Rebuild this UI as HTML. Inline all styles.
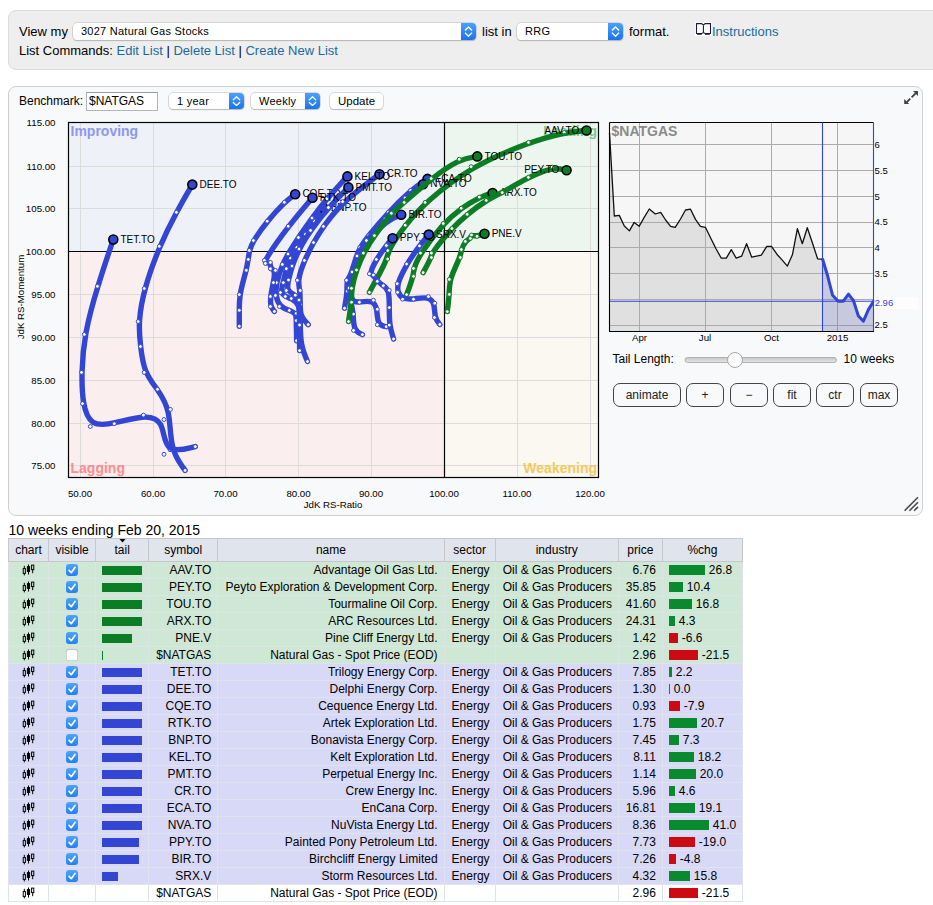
<!DOCTYPE html>
<html><head><meta charset="utf-8"><title>RRG - 3027 Natural Gas Stocks</title>
<style>
html,body{margin:0;padding:0;background:#fff}
body{width:933px;height:905px;overflow:hidden;position:relative;font-family:"Liberation Sans",Arial,Helvetica,sans-serif;color:#000;font-size:13px}
.abs{position:absolute;white-space:nowrap}
a{color:#1a6a9b;text-decoration:none}
#topbar{left:8px;top:10px;width:940px;height:58px;background:#eeeeee;border:1px solid #dcdcdc;border-radius:8px}
#panel{left:8px;top:86px;width:913px;height:428px;background:#f8f9fb;border:1px solid #cfcfcf;border-radius:8px}
.sel{height:16px;border-radius:4px;background:#fff;box-shadow:0 0 0 0.5px #b9b9b9,0 1px 1px rgba(0,0,0,.25);font-size:11px;line-height:16px;box-sizing:border-box;padding-left:8px;letter-spacing:0.25px}
.sel b{position:absolute;right:0;top:0;width:15px;height:16px;border-radius:0 4px 4px 0;background:linear-gradient(#4ba1fb,#1a73f0)}
.sel b svg{position:absolute;left:0;top:0;width:15px;height:100%}
.sel.tall{height:17px;line-height:17px}.sel.tall b{height:17px}
.btn{height:16px;border-radius:4px;background:#fff;box-shadow:0 0 0 0.5px #b9b9b9,0 1px 1px rgba(0,0,0,.25);font-size:11.5px;line-height:16px;text-align:center}
.inp{background:#fff;border:1px solid #b4b4b4;border-top-color:#9a9a9a;box-sizing:border-box;font-size:12px;line-height:17px;padding-left:2px}
.rb{height:24px;border:1px solid #444;border-radius:7px;box-sizing:border-box;font-size:12px;line-height:22px;text-align:center;background:#f8f9fb;color:#222}
svg text{font-family:"Liberation Sans",Arial,Helvetica,sans-serif}
table{border-collapse:collapse;font-size:12px;table-layout:fixed;width:735px}
#tbl{left:8px;top:538px}
th{font-weight:normal;background:#e0e4ec;height:22px;padding:0;border:1px solid #c8c8cc;font-size:12px}
td{height:16px;padding:0;border:1px solid #dde3e3;line-height:16px;white-space:nowrap;position:relative}
tr.g td{background:#cfe8d5;border-color:#dde4e6}
tr.b td{background:#d8d9f6;border-color:#dfe3ee}
tr.w td{background:#fff;border-color:#dde4e8}
td.c{text-align:center}
td.r{text-align:right;padding-right:6px}
td.l{text-align:left;padding-left:7px}
td.t{text-align:left;padding-left:6px}
td.p{text-align:left;padding-left:6px}
.tb{display:inline-block;height:9px;vertical-align:-1px}
.pb{display:inline-block;height:10px;vertical-align:-1px;margin-right:4px}
.ci{vertical-align:-2px}
.cb{display:inline-block;width:12px;height:12px;border-radius:3px;vertical-align:-2px;position:relative}
.cb.on{background:linear-gradient(#4da4fb,#2280f4)}
.cb.off{background:#fff;box-shadow:inset 0 0 0 0.5px #aaa,inset 0 1px 1px rgba(0,0,0,.15)}
.cb svg{position:absolute;left:0;top:0}
</style></head><body>

<div id="topbar" class="abs"></div>
<div class="abs" style="left:19px;top:23px;line-height:18px">View my</div>
<div class="abs sel tall" style="left:73px;top:23px;width:403px">3027 Natural Gas Stocks<b><svg viewBox="0 0 15 16" preserveAspectRatio="none"><path d="M4.3 6.7L7.5 3.8l3.2 2.9M4.3 9.5l3.2 2.9 3.2-2.9" fill="none" stroke="#fff" stroke-width="1.3" stroke-linecap="round" stroke-linejoin="round"/></svg></b></div>
<div class="abs" style="left:482px;top:23px;line-height:18px">list in</div>
<div class="abs sel tall" style="left:517px;top:23px;width:106px">RRG<b><svg viewBox="0 0 15 16" preserveAspectRatio="none"><path d="M4.3 6.7L7.5 3.8l3.2 2.9M4.3 9.5l3.2 2.9 3.2-2.9" fill="none" stroke="#fff" stroke-width="1.3" stroke-linecap="round" stroke-linejoin="round"/></svg></b></div>
<div class="abs" style="left:629px;top:23px;line-height:18px">format.</div>
<svg class="abs" style="left:695px;top:22px" width="17" height="14" viewBox="0 0 17 14"><rect width="17" height="14" fill="#fff"/><path d="M1.5 1.6H6.6L8.4 3L10.2 1.6H15.5V11.5H10.2L8.4 10.6L6.6 11.5H1.5ZM8.4 3V10.6" fill="#fff" stroke="#1b1b36" stroke-width="1.1" stroke-linejoin="miter"/><path d="M2.2 12.3H6.8M10 12.3H14.8" stroke="#1b1b36" stroke-width="1" fill="none"/></svg>
<div class="abs" style="left:712px;top:23px;line-height:18px"><a>Instructions</a></div>
<div class="abs" style="left:19px;top:42px;line-height:18px">List Commands: <a>Edit List</a> | <a>Delete List</a> | <a>Create New List</a></div>

<div id="panel" class="abs"></div>
<div class="abs" style="left:19px;top:92px;line-height:18px;font-size:12px">Benchmark:</div>
<div class="abs inp" style="left:86px;top:92px;width:72px;height:19px">$NATGAS</div>
<div class="abs sel" style="left:169px;top:93px;width:75px">1 year<b><svg viewBox="0 0 15 16" preserveAspectRatio="none"><path d="M4.3 6.7L7.5 3.8l3.2 2.9M4.3 9.5l3.2 2.9 3.2-2.9" fill="none" stroke="#fff" stroke-width="1.3" stroke-linecap="round" stroke-linejoin="round"/></svg></b></div>
<div class="abs sel" style="left:251px;top:93px;width:69px">Weekly<b><svg viewBox="0 0 15 16" preserveAspectRatio="none"><path d="M4.3 6.7L7.5 3.8l3.2 2.9M4.3 9.5l3.2 2.9 3.2-2.9" fill="none" stroke="#fff" stroke-width="1.3" stroke-linecap="round" stroke-linejoin="round"/></svg></b></div>
<div class="abs btn" style="left:330px;top:93px;width:53px">Update</div>

<svg class="abs" style="left:0;top:0" width="933" height="905" viewBox="0 0 933 905">
<defs><linearGradient id="trk" x1="0" y1="0" x2="0" y2="1"><stop offset="0" stop-color="#c6c6c6"/><stop offset="1" stop-color="#e6e6e6"/></linearGradient><clipPath id="cp"><rect x="69" y="123" width="529.5" height="354"/></clipPath></defs>
<!-- quadrants -->
<rect x="68.5" y="122.5" width="376" height="129" fill="#eff1f9"/>
<rect x="444.5" y="122.5" width="154" height="129" fill="#edf5ef"/>
<rect x="68.5" y="251.5" width="376" height="225.5" fill="#fbeeee"/>
<rect x="444.5" y="251.5" width="154" height="225.5" fill="#fbf8f1"/>
<g stroke="#dcdcdc" stroke-width="1" fill="none">
<path d="M80.5 123V477M153.5 123V477M225.5 123V477M298.5 123V477M371.5 123V477M517.5 123V477M590.5 123V477"/>
<path d="M69 166.5H598M69 208.5H598M69 294.5H598M69 337.5H598M69 380.5H598M69 423.5H598M69 465.5H598"/>
</g>
<g clip-path="url(#cp)" font-weight="bold" font-size="14">
<text x="70.5" y="136" fill="#8e98ea">Improving</text>
<text x="597" y="136" fill="#7cc98a" text-anchor="end">Leading</text>
<text x="70.5" y="473" fill="#ff8c90">Lagging</text>
<text x="597" y="473" fill="#f5c860" text-anchor="end">Weakening</text>
</g>
<path d="M444.5 122.5V477M68.5 251.5H598.5" stroke="#000" stroke-width="1.2" fill="none"/>
<rect x="68.5" y="122.5" width="530" height="355" fill="none" stroke="#000" stroke-width="1.2"/>
<g font-size="9.7" fill="#000" text-anchor="end">
<text x="55.5" y="126">115.00</text><text x="55.5" y="169.5">110.00</text><text x="55.5" y="212">105.00</text><text x="55.5" y="255">100.00</text><text x="55.5" y="298">95.00</text><text x="55.5" y="341">90.00</text><text x="55.5" y="384">85.00</text><text x="55.5" y="426.5">80.00</text><text x="55.5" y="469">75.00</text>
</g>
<g font-size="9.7" fill="#000" text-anchor="middle">
<text x="80" y="496.5">50.00</text><text x="153" y="496.5">60.00</text><text x="225.5" y="496.5">70.00</text><text x="298.5" y="496.5">80.00</text><text x="371" y="496.5">90.00</text><text x="444" y="496.5">100.00</text><text x="517" y="496.5">110.00</text><text x="590" y="496.5">120.00</text>
<text x="333" y="508">JdK RS-Ratio</text>
<text transform="translate(23.5 297) rotate(-90)">JdK RS-Momentum</text>
</g>
<g clip-path="url(#cp)" font-size="10" fill="#000">
<g><path d="M586.5,130.5L582.8,130.8C579.1,131.2 571.6,131.8 562.0,133.8C552.3,135.8 540.3,139.1 524.8,144.8C509.3,150.5 490.2,158.5 473.0,168.5C455.8,178.5 440.4,190.5 429.4,200.2C418.5,210.0 411.8,217.6 405.6,225.6C399.4,233.6 393.5,242.1 390.6,247.7C387.7,253.3 387.7,256.2 384.7,263.1C381.6,270.1 375.5,281.2 372.4,286.8L369.4,292.3" fill="none" stroke="#0b7d25" stroke-width="5.4" stroke-linecap="round" stroke-linejoin="round"/><g fill="#fff" stroke="#0b7d25" stroke-width="1"><circle cx="564.2" cy="132.5" r="1.95"/><circle cx="528.4" cy="142.4" r="1.95"/><circle cx="471.1" cy="166.6" r="1.95"/><circle cx="425.1" cy="202.4" r="1.95"/><circle cx="405.2" cy="225.2" r="1.95"/><circle cx="387.7" cy="250.5" r="1.95"/><circle cx="387.7" cy="259.0" r="1.95"/><circle cx="369.4" cy="292.3" r="1.95"/></g><circle cx="586.5" cy="130.5" r="4.5" fill="#0b7d25" stroke="#000" stroke-width="1.6"/><text x="579.3" y="133.6" text-anchor="end">AAV.TO</text></g>
<g><path d="M492.6,193.0L490.4,193.7C488.2,194.4 483.7,195.7 478.5,198.3C473.3,200.8 467.2,204.5 461.2,208.9C455.2,213.3 449.2,218.4 442.4,225.9C435.6,233.4 428.1,243.2 423.1,250.7C418.2,258.2 415.8,263.3 414.7,267.2C413.5,271.0 413.5,273.7 412.3,278.0C411.2,282.4 408.9,288.5 407.8,291.6L406.6,294.6" fill="none" stroke="#0b7d25" stroke-width="5.4" stroke-linecap="round" stroke-linejoin="round"/><g fill="#fff" stroke="#0b7d25" stroke-width="1"><circle cx="479.3" cy="197.1" r="1.95"/><circle cx="461.2" cy="208.2" r="1.95"/><circle cx="443.2" cy="223.5" r="1.95"/><circle cx="420.5" cy="253.1" r="1.95"/><circle cx="413.5" cy="268.4" r="1.95"/><circle cx="413.5" cy="276.3" r="1.95"/><circle cx="406.6" cy="294.6" r="1.95"/></g><circle cx="492.6" cy="193.0" r="4.5" fill="#0b7d25" stroke="#000" stroke-width="1.6"/><text x="499.8" y="196.1">ARX.TO</text></g>
<g><path d="M401.2,214.7L398.7,215.8C396.1,216.8 391.1,218.9 386.0,222.8C381.0,226.7 376.0,232.3 371.8,237.5C367.7,242.7 364.3,247.3 361.7,252.3C359.0,257.3 357.0,262.7 355.3,268.2C353.7,273.7 352.3,279.3 351.7,285.0C351.0,290.7 350.9,296.5 352.3,299.3C353.7,302.2 356.6,302.2 360.3,301.9C364.1,301.5 368.7,300.9 371.7,302.0C374.7,303.2 376.0,306.2 376.7,310.3C377.3,314.4 377.3,319.5 378.8,322.4C380.3,325.4 383.3,326.0 384.8,326.4L386.3,326.7" fill="none" stroke="#3346d3" stroke-width="5.4" stroke-linecap="round" stroke-linejoin="round"/><g fill="#fff" stroke="#3346d3" stroke-width="1"><circle cx="386.0" cy="221.0" r="1.95"/><circle cx="371.0" cy="238.0" r="1.95"/><circle cx="361.0" cy="252.0" r="1.95"/><circle cx="355.0" cy="268.0" r="1.95"/><circle cx="351.0" cy="285.0" r="1.95"/><circle cx="350.9" cy="302.2" r="1.95"/><circle cx="359.4" cy="302.2" r="1.95"/><circle cx="373.4" cy="300.2" r="1.95"/><circle cx="377.3" cy="309.2" r="1.95"/><circle cx="377.3" cy="324.7" r="1.95"/><circle cx="386.3" cy="326.7" r="1.95"/></g><circle cx="401.2" cy="214.7" r="4.5" fill="#3346d3" stroke="#000" stroke-width="1.6"/><text x="408.4" y="217.8">BIR.TO</text></g>
<g><path d="M323.5,208.0L321.9,210.2C320.3,212.3 317.2,216.6 314.1,220.9C311.0,225.3 308.0,229.6 305.0,234.0C302.0,238.3 298.9,242.6 296.4,246.6C293.9,250.6 292.0,254.3 290.4,257.9C288.8,261.6 287.5,265.1 286.4,269.2C285.3,273.3 284.3,278.0 283.3,281.9C282.3,285.9 281.4,289.2 281.7,291.5C282.0,293.8 283.7,295.2 285.5,296.2C287.3,297.2 289.3,297.8 291.8,299.2C294.3,300.5 297.2,302.5 298.7,306.5C300.2,310.5 300.2,316.6 300.3,323.4C300.3,330.3 300.5,337.9 301.7,344.4C302.9,350.9 305.2,356.2 306.3,358.8L307.5,361.5" fill="none" stroke="#3346d3" stroke-width="5.4" stroke-linecap="round" stroke-linejoin="round"/><g fill="#fff" stroke="#3346d3" stroke-width="1"><circle cx="314.0" cy="220.9" r="1.95"/><circle cx="305.0" cy="234.0" r="1.95"/><circle cx="295.9" cy="246.9" r="1.95"/><circle cx="290.0" cy="258.0" r="1.95"/><circle cx="286.3" cy="268.7" r="1.95"/><circle cx="283.3" cy="282.6" r="1.95"/><circle cx="280.4" cy="292.5" r="1.95"/><circle cx="285.3" cy="296.5" r="1.95"/><circle cx="291.3" cy="298.5" r="1.95"/><circle cx="300.2" cy="304.5" r="1.95"/><circle cx="300.2" cy="322.6" r="1.95"/><circle cx="300.6" cy="345.6" r="1.95"/><circle cx="307.5" cy="361.5" r="1.95"/></g><circle cx="323.5" cy="208.0" r="4.5" fill="#3346d3" stroke="#000" stroke-width="1.6"/><text x="330.7" y="211.1">BNP.TO</text></g>
<g><path d="M295.2,194.2L293.4,195.5C291.6,196.9 287.9,199.6 283.3,204.1C278.6,208.6 272.9,214.9 267.8,221.3C262.6,227.6 258.0,234.1 255.0,238.9C252.0,243.8 250.7,247.1 249.8,250.2C249.0,253.4 248.6,256.4 248.1,259.7C247.6,263.0 247.0,266.7 245.5,272.5C244.0,278.4 241.6,286.5 240.5,293.2C239.3,299.8 239.3,305.1 239.3,310.3C239.3,315.6 239.3,320.9 239.3,323.6L239.3,326.2" fill="none" stroke="#3346d3" stroke-width="5.4" stroke-linecap="round" stroke-linejoin="round"/><g fill="#fff" stroke="#3346d3" stroke-width="1"><circle cx="284.3" cy="202.3" r="1.95"/><circle cx="267.2" cy="221.2" r="1.95"/><circle cx="253.4" cy="240.5" r="1.95"/><circle cx="249.3" cy="250.4" r="1.95"/><circle cx="248.3" cy="259.4" r="1.95"/><circle cx="246.3" cy="270.3" r="1.95"/><circle cx="239.3" cy="294.6" r="1.95"/><circle cx="239.3" cy="310.3" r="1.95"/><circle cx="239.3" cy="326.2" r="1.95"/></g><circle cx="295.2" cy="194.2" r="4.5" fill="#3346d3" stroke="#000" stroke-width="1.6"/><text x="302.4" y="197.3">CQE.TO</text></g>
<g><path d="M379.5,174.3L373.3,178.8C367.2,183.4 354.9,192.5 345.6,201.2C336.2,209.9 329.8,218.1 324.9,225.0C320.1,231.8 316.8,237.1 313.6,242.8C310.5,248.5 307.4,254.4 304.7,260.7C302.0,267.0 299.7,273.7 299.0,278.7C298.3,283.7 299.2,287.1 299.7,291.1C300.2,295.2 300.2,299.8 300.2,304.1C300.2,308.3 300.2,312.2 301.5,315.5C302.9,318.9 305.5,321.7 306.9,323.2L308.2,324.6" fill="none" stroke="#3346d3" stroke-width="5.4" stroke-linecap="round" stroke-linejoin="round"/><g fill="#fff" stroke="#3346d3" stroke-width="1"><circle cx="342.6" cy="201.6" r="1.95"/><circle cx="323.4" cy="226.4" r="1.95"/><circle cx="313.5" cy="242.5" r="1.95"/><circle cx="304.4" cy="260.4" r="1.95"/><circle cx="297.3" cy="280.3" r="1.95"/><circle cx="300.2" cy="290.5" r="1.95"/><circle cx="300.2" cy="304.5" r="1.95"/><circle cx="300.2" cy="316.0" r="1.95"/><circle cx="308.2" cy="324.6" r="1.95"/></g><circle cx="379.5" cy="174.3" r="4.5" fill="#3346d3" stroke="#000" stroke-width="1.6"/><text x="386.7" y="177.4">CR.TO</text></g>
<g><path d="M192.3,184.6L189.7,189.2C187.0,193.8 181.7,203.1 176.2,213.3C170.7,223.6 165.0,235.0 159.6,247.7C154.3,260.4 149.2,274.4 145.7,287.0C142.2,299.5 140.2,310.5 139.6,320.2C138.9,329.8 139.7,338.2 140.7,346.7C141.7,355.1 142.9,363.8 145.8,370.9C148.6,378.0 153.1,383.7 157.4,389.8C161.8,396.0 166.1,402.7 168.2,412.8C170.3,422.8 170.1,436.3 172.6,446.4C175.0,456.6 180.1,463.5 182.6,466.9L185.1,470.4" fill="none" stroke="#3346d3" stroke-width="5.4" stroke-linecap="round" stroke-linejoin="round"/><g fill="#fff" stroke="#3346d3" stroke-width="1"><circle cx="176.4" cy="212.3" r="1.95"/><circle cx="159.3" cy="246.3" r="1.95"/><circle cx="144.2" cy="288.5" r="1.95"/><circle cx="138.2" cy="321.5" r="1.95"/><circle cx="140.4" cy="346.5" r="1.95"/><circle cx="144.2" cy="372.4" r="1.95"/><circle cx="157.5" cy="389.3" r="1.95"/><circle cx="170.4" cy="409.4" r="1.95"/><circle cx="170.0" cy="449.7" r="1.95"/><circle cx="185.1" cy="470.4" r="1.95"/></g><circle cx="192.3" cy="184.6" r="4.5" fill="#3346d3" stroke="#000" stroke-width="1.6"/><text x="199.5" y="187.7">DEE.TO</text></g>
<g><path d="M427.5,178.9L424.7,180.8C421.9,182.7 416.2,186.6 409.7,192.1C403.2,197.7 395.7,205.0 388.8,212.5C381.8,219.9 375.3,227.6 370.6,233.4C365.8,239.3 362.8,243.4 360.6,247.4C358.4,251.3 356.9,255.2 355.4,259.8C354.0,264.5 352.4,269.9 350.9,273.5C349.4,277.0 348.0,278.7 347.4,281.3C346.8,284.0 347.2,287.6 346.8,292.3C346.5,296.9 345.5,302.6 345.0,305.4L344.5,308.2" fill="none" stroke="#3346d3" stroke-width="5.4" stroke-linecap="round" stroke-linejoin="round"/><g fill="#fff" stroke="#3346d3" stroke-width="1"><circle cx="410.6" cy="190.4" r="1.95"/><circle cx="388.3" cy="212.3" r="1.95"/><circle cx="368.8" cy="235.2" r="1.95"/><circle cx="359.8" cy="247.5" r="1.95"/><circle cx="355.5" cy="259.0" r="1.95"/><circle cx="350.9" cy="275.4" r="1.95"/><circle cx="346.5" cy="280.3" r="1.95"/><circle cx="347.5" cy="291.3" r="1.95"/><circle cx="344.5" cy="308.2" r="1.95"/></g><circle cx="427.5" cy="178.9" r="4.5" fill="#3346d3" stroke="#000" stroke-width="1.6"/><text x="434.7" y="182.0">ECA.TO</text></g>
<g><path d="M347.4,176.4L343.9,180.1C340.5,183.9 333.6,191.3 327.7,198.3C321.8,205.2 316.9,211.6 312.2,218.0C307.5,224.5 302.9,231.0 298.9,237.0C294.9,243.0 291.5,248.5 288.8,253.0C286.1,257.5 284.2,260.9 282.3,265.7C280.3,270.5 278.4,276.5 277.2,281.7C276.1,286.9 275.7,291.2 276.2,295.2C276.7,299.2 278.1,302.8 280.4,305.3C282.7,307.8 286.0,309.1 288.8,310.2C291.6,311.4 294.0,312.4 295.1,314.1C296.3,315.8 296.3,318.2 296.3,322.8C296.4,327.3 296.5,334.0 296.6,337.4L296.6,340.7" fill="none" stroke="#3346d3" stroke-width="5.4" stroke-linecap="round" stroke-linejoin="round"/><g fill="#fff" stroke="#3346d3" stroke-width="1"><circle cx="326.7" cy="198.8" r="1.95"/><circle cx="312.0" cy="218.0" r="1.95"/><circle cx="298.4" cy="237.5" r="1.95"/><circle cx="288.0" cy="254.0" r="1.95"/><circle cx="282.3" cy="264.4" r="1.95"/><circle cx="276.4" cy="282.6" r="1.95"/><circle cx="275.4" cy="295.5" r="1.95"/><circle cx="279.4" cy="306.5" r="1.95"/><circle cx="289.3" cy="310.4" r="1.95"/><circle cx="296.3" cy="313.4" r="1.95"/><circle cx="296.3" cy="320.6" r="1.95"/><circle cx="296.6" cy="340.7" r="1.95"/></g><circle cx="347.4" cy="176.4" r="4.5" fill="#3346d3" stroke="#000" stroke-width="1.6"/><text x="354.6" y="179.5">KEL.TO</text></g>
<g><path d="M423.1,184.3L420.1,186.6C417.1,188.9 411.0,193.4 404.7,199.2C398.3,205.0 391.7,212.0 385.2,219.1C378.8,226.2 372.6,233.3 367.9,239.5C363.3,245.7 360.1,250.8 357.7,256.1C355.3,261.3 353.7,266.7 352.3,272.0C351.0,277.3 350.0,282.7 349.8,287.7C349.6,292.7 350.3,297.5 351.0,301.8C351.8,306.2 352.6,310.1 353.1,314.8C353.5,319.5 353.5,325.0 355.0,328.4C356.5,331.8 359.4,333.2 360.9,333.9L362.4,334.6" fill="none" stroke="#3346d3" stroke-width="5.4" stroke-linecap="round" stroke-linejoin="round"/><g fill="#fff" stroke="#3346d3" stroke-width="1"><circle cx="405.0" cy="198.0" r="1.95"/><circle cx="385.0" cy="219.0" r="1.95"/><circle cx="366.4" cy="240.5" r="1.95"/><circle cx="357.0" cy="256.0" r="1.95"/><circle cx="352.0" cy="272.0" r="1.95"/><circle cx="349.0" cy="288.0" r="1.95"/><circle cx="350.9" cy="302.2" r="1.95"/><circle cx="353.5" cy="314.1" r="1.95"/><circle cx="353.5" cy="330.4" r="1.95"/><circle cx="362.4" cy="334.6" r="1.95"/></g><circle cx="423.1" cy="184.3" r="4.5" fill="#3346d3" stroke="#000" stroke-width="1.6"/><text x="430.3" y="187.4">NVA.TO</text></g>
<g><path d="M566.6,170.3L564.2,169.8C561.8,169.2 557.1,168.2 550.7,169.3C544.3,170.5 536.4,173.9 528.0,178.2C519.7,182.4 510.9,187.5 503.9,191.4C496.9,195.2 491.5,197.8 485.7,201.4C479.9,205.0 473.5,209.7 467.8,214.4C462.1,219.0 457.0,223.8 451.0,230.2C445.1,236.7 438.2,244.9 434.8,249.7C431.4,254.6 431.4,256.0 430.0,259.3C428.6,262.5 425.9,267.6 424.5,270.1L423.1,272.6" fill="none" stroke="#0b7d25" stroke-width="5.4" stroke-linecap="round" stroke-linejoin="round"/><g fill="#fff" stroke="#0b7d25" stroke-width="1"><circle cx="552.3" cy="167.1" r="1.95"/><circle cx="528.4" cy="177.3" r="1.95"/><circle cx="502.2" cy="192.6" r="1.95"/><circle cx="486.2" cy="200.4" r="1.95"/><circle cx="467.2" cy="214.3" r="1.95"/><circle cx="451.9" cy="228.5" r="1.95"/><circle cx="431.4" cy="253.1" r="1.95"/><circle cx="431.4" cy="257.5" r="1.95"/><circle cx="423.1" cy="272.6" r="1.95"/></g><circle cx="566.6" cy="170.3" r="4.5" fill="#0b7d25" stroke="#000" stroke-width="1.6"/><text x="559.4" y="173.4" text-anchor="end">PEY.TO</text></g>
<g><path d="M348.4,187.4L345.1,190.8C341.7,194.1 335.1,200.8 328.8,208.0C322.4,215.1 316.5,222.8 311.6,229.7C306.7,236.6 302.8,242.8 299.8,248.7C296.7,254.7 294.3,260.3 292.6,265.5C290.8,270.7 289.7,275.3 288.7,279.4C287.8,283.5 287.0,287.0 288.2,289.5C289.3,292.1 292.3,293.6 294.4,295.2C296.5,296.8 297.8,298.4 298.5,303.4C299.2,308.3 299.4,316.7 299.5,325.1C299.6,333.5 299.6,342.1 299.6,346.3L299.6,350.6" fill="none" stroke="#3346d3" stroke-width="5.4" stroke-linecap="round" stroke-linejoin="round"/><g fill="#fff" stroke="#3346d3" stroke-width="1"><circle cx="328.4" cy="207.5" r="1.95"/><circle cx="310.5" cy="230.4" r="1.95"/><circle cx="299.0" cy="249.0" r="1.95"/><circle cx="292.0" cy="266.0" r="1.95"/><circle cx="288.5" cy="280.0" r="1.95"/><circle cx="286.3" cy="290.5" r="1.95"/><circle cx="295.3" cy="295.2" r="1.95"/><circle cx="299.0" cy="300.0" r="1.95"/><circle cx="299.6" cy="325.0" r="1.95"/><circle cx="299.6" cy="350.6" r="1.95"/></g><circle cx="348.4" cy="187.4" r="4.5" fill="#3346d3" stroke="#000" stroke-width="1.6"/><text x="355.6" y="190.5">PMT.TO</text></g>
<g><path d="M484.5,233.7L483.3,234.1C482.0,234.6 479.6,235.4 477.4,235.7C475.2,235.9 473.4,235.4 472.2,235.8C471.1,236.1 470.7,237.3 469.7,238.3C468.6,239.4 467.0,240.4 465.5,242.2C464.0,244.1 462.6,246.8 461.8,249.5C461.0,252.2 460.6,254.8 458.6,259.8C456.6,264.8 453.0,272.1 451.1,278.2C449.3,284.4 449.3,289.4 449.0,294.8C448.6,300.1 448.0,305.9 447.6,308.7L447.3,311.6" fill="none" stroke="#0b7d25" stroke-width="5.4" stroke-linecap="round" stroke-linejoin="round"/><g fill="#fff" stroke="#0b7d25" stroke-width="1"><circle cx="477.1" cy="236.3" r="1.95"/><circle cx="471.5" cy="235.0" r="1.95"/><circle cx="470.3" cy="238.4" r="1.95"/><circle cx="465.3" cy="241.4" r="1.95"/><circle cx="461.3" cy="249.5" r="1.95"/><circle cx="460.3" cy="257.5" r="1.95"/><circle cx="449.3" cy="279.4" r="1.95"/><circle cx="449.3" cy="294.4" r="1.95"/><circle cx="447.3" cy="311.6" r="1.95"/></g><circle cx="484.5" cy="233.7" r="4.5" fill="#0b7d25" stroke="#000" stroke-width="1.6"/><text x="491.7" y="236.8">PNE.V</text></g>
<g><path d="M392.6,238.2L391.6,239.4C390.5,240.6 388.4,243.1 385.7,246.6C383.0,250.1 379.6,254.8 376.8,259.5C374.0,264.2 371.7,269.0 371.2,271.6C370.7,274.2 372.1,274.6 373.4,275.8C374.7,277.1 376.0,279.2 377.7,281.0C379.3,282.8 381.3,284.2 383.3,285.7C385.3,287.2 387.3,288.8 388.3,292.4C389.3,296.1 389.3,301.8 389.3,307.6C389.3,313.4 389.3,319.3 390.0,324.5C390.7,329.7 392.2,334.4 392.9,336.7L393.6,339.0" fill="none" stroke="#3346d3" stroke-width="5.4" stroke-linecap="round" stroke-linejoin="round"/><g fill="#fff" stroke="#3346d3" stroke-width="1"><circle cx="386.3" cy="245.5" r="1.95"/><circle cx="376.3" cy="259.4" r="1.95"/><circle cx="369.4" cy="273.8" r="1.95"/><circle cx="373.4" cy="275.0" r="1.95"/><circle cx="377.3" cy="281.3" r="1.95"/><circle cx="383.3" cy="285.7" r="1.95"/><circle cx="389.3" cy="290.3" r="1.95"/><circle cx="389.3" cy="307.6" r="1.95"/><circle cx="389.3" cy="325.1" r="1.95"/><circle cx="393.6" cy="339.0" r="1.95"/></g><circle cx="392.6" cy="238.2" r="4.5" fill="#3346d3" stroke="#000" stroke-width="1.6"/><text x="399.8" y="241.3">PPY.TO</text></g>
<g><path d="M312.5,197.7L308.4,202.5C304.4,207.2 296.3,216.7 288.3,227.2C280.3,237.6 272.3,249.0 268.5,255.2C264.7,261.4 265.1,262.4 266.1,262.7C267.1,263.1 268.7,262.7 269.6,263.6C270.4,264.5 270.4,266.6 271.2,267.9C272.1,269.3 273.7,269.8 274.2,272.2C274.7,274.5 274.1,278.5 273.2,282.9C272.4,287.2 271.4,291.9 270.9,295.8C270.4,299.8 270.4,303.2 271.1,305.7C271.7,308.1 273.1,309.8 273.7,310.6L274.4,311.4" fill="none" stroke="#3346d3" stroke-width="5.4" stroke-linecap="round" stroke-linejoin="round"/><g fill="#fff" stroke="#3346d3" stroke-width="1"><circle cx="288.2" cy="226.2" r="1.95"/><circle cx="264.4" cy="260.4" r="1.95"/><circle cx="265.4" cy="263.4" r="1.95"/><circle cx="270.4" cy="262.4" r="1.95"/><circle cx="270.4" cy="268.7" r="1.95"/><circle cx="275.4" cy="270.4" r="1.95"/><circle cx="273.4" cy="282.6" r="1.95"/><circle cx="270.4" cy="296.5" r="1.95"/><circle cx="270.4" cy="306.5" r="1.95"/><circle cx="274.4" cy="311.4" r="1.95"/></g><circle cx="312.5" cy="197.7" r="4.5" fill="#3346d3" stroke="#000" stroke-width="1.6"/><text x="319.7" y="200.8">RTK.TO</text></g>
<g><path d="M428.8,234.6L427.2,236.5C425.7,238.4 422.6,242.1 418.9,247.0C415.2,251.9 410.9,258.0 407.2,264.3C403.5,270.6 400.3,277.1 398.8,281.8C397.3,286.6 397.5,289.4 398.4,292.0C399.3,294.6 400.9,296.9 403.6,298.1C406.2,299.2 409.9,299.2 414.2,298.8C418.5,298.3 423.4,297.5 427.0,298.1C430.5,298.8 432.7,301.0 433.7,304.5C434.7,308.0 434.5,312.7 435.4,316.3C436.2,319.8 438.0,322.2 438.9,323.3L439.8,324.5" fill="none" stroke="#3346d3" stroke-width="5.4" stroke-linecap="round" stroke-linejoin="round"/><g fill="#fff" stroke="#3346d3" stroke-width="1"><circle cx="419.5" cy="245.9" r="1.95"/><circle cx="406.6" cy="264.0" r="1.95"/><circle cx="397.2" cy="283.7" r="1.95"/><circle cx="397.6" cy="292.3" r="1.95"/><circle cx="402.6" cy="299.2" r="1.95"/><circle cx="413.5" cy="299.2" r="1.95"/><circle cx="428.4" cy="296.6" r="1.95"/><circle cx="434.8" cy="303.2" r="1.95"/><circle cx="434.4" cy="317.5" r="1.95"/><circle cx="439.8" cy="324.5" r="1.95"/></g><circle cx="428.8" cy="234.6" r="4.5" fill="#3346d3" stroke="#000" stroke-width="1.6"/><text x="436.0" y="237.7">SRX.V</text></g>
<g><path d="M113.3,239.5L110.6,247.3C108.0,255.1 102.7,270.7 97.9,286.5C93.0,302.3 88.7,318.4 86.0,332.7C83.4,347.1 82.4,359.7 82.1,371.3C81.8,382.8 82.2,393.2 83.6,402.2C85.1,411.2 87.7,418.9 93.0,422.2C98.3,425.6 106.3,424.6 115.1,422.7C124.0,420.8 133.7,418.0 142.0,417.3C150.3,416.6 157.1,418.0 160.6,424.6C164.0,431.1 164.0,442.7 169.2,447.2C174.4,451.7 184.9,449.2 190.1,447.9L195.3,446.6" fill="none" stroke="#3346d3" stroke-width="5.4" stroke-linecap="round" stroke-linejoin="round"/><g fill="#fff" stroke="#3346d3" stroke-width="1"><circle cx="97.4" cy="286.3" r="1.95"/><circle cx="84.3" cy="334.4" r="1.95"/><circle cx="81.5" cy="372.4" r="1.95"/><circle cx="82.5" cy="403.6" r="1.95"/><circle cx="90.3" cy="426.5" r="1.95"/><circle cx="114.3" cy="423.7" r="1.95"/><circle cx="143.4" cy="415.1" r="1.95"/><circle cx="164.0" cy="419.5" r="1.95"/><circle cx="164.0" cy="454.3" r="1.95"/><circle cx="195.3" cy="446.6" r="1.95"/></g><circle cx="113.3" cy="239.5" r="4.5" fill="#3346d3" stroke="#000" stroke-width="1.6"/><text x="120.5" y="242.6">TET.TO</text></g>
<g><path d="M477.3,156.4L474.3,156.9C471.3,157.3 465.2,158.3 457.5,161.9C449.9,165.6 440.5,172.1 431.4,179.3C422.2,186.5 413.2,194.4 406.6,200.2C399.9,206.0 395.6,209.7 390.6,215.2C385.7,220.7 380.0,228.2 375.4,234.8C370.7,241.4 367.1,247.3 364.1,253.0C361.1,258.7 358.8,264.4 356.8,270.2C354.8,276.1 353.2,282.2 352.3,287.6C351.5,292.9 351.5,297.6 351.0,303.1C350.5,308.6 349.5,315.1 349.0,318.3L348.5,321.5" fill="none" stroke="#0b7d25" stroke-width="5.4" stroke-linecap="round" stroke-linejoin="round"/><g fill="#fff" stroke="#0b7d25" stroke-width="1"><circle cx="459.2" cy="159.2" r="1.95"/><circle cx="431.2" cy="178.5" r="1.95"/><circle cx="404.2" cy="202.4" r="1.95"/><circle cx="391.3" cy="213.3" r="1.95"/><circle cx="374.4" cy="235.6" r="1.95"/><circle cx="363.4" cy="253.1" r="1.95"/><circle cx="356.5" cy="270.0" r="1.95"/><circle cx="351.5" cy="288.3" r="1.95"/><circle cx="351.5" cy="302.2" r="1.95"/><circle cx="348.5" cy="321.5" r="1.95"/></g><circle cx="477.3" cy="156.4" r="4.5" fill="#0b7d25" stroke="#000" stroke-width="1.6"/><text x="484.5" y="159.5">TOU.TO</text></g>
</g>

<!-- mini chart -->
<rect x="609.5" y="122.5" width="264" height="208.5" fill="#f6f6f6"/>
<polygon points="609.5,132.9 614.3,216.0 619.3,215.4 624.3,226.0 629.4,230.9 634.2,222.4 639.2,226.3 644.2,217.4 649.3,209.0 655.3,214.0 660.7,212.4 665.6,220.0 670.6,226.3 675.2,227.3 680.5,219.0 685.5,210.0 690.5,209.2 695.5,219.4 700.4,226.3 705.4,227.3 710.8,238.3 716.0,248.8 721.3,258.2 726.3,258.2 731.3,249.6 736.2,258.2 741.6,256.2 746.6,243.7 751.7,257.2 756.5,256.2 761.3,255.2 766.8,246.4 771.5,246.4 776.9,254.2 781.8,259.6 787.4,266.1 792.4,254.8 797.4,228.7 802.3,243.7 807.3,227.7 812.7,243.7 817.6,258.8 822.6,259.3 822.6,259.3 827.6,275.8 832.6,295.3 838.1,301.3 843.1,301.3 848.5,294.1 853.5,300.7 858.4,316.0 863.4,321.1 868.4,309.6 873.7,301.1 873.7,331 609.5,331" fill="#e0e0e0"/>
<g stroke="#ababab" stroke-width="1" fill="none">
<path d="M639.5 123V331M705.5 123V331M771.5 123V331M837.5 123V331"/>
<path d="M610 144.5H874M610 170.5H874M610 196.5H874M610 222.5H874M610 247.5H874M610 273.5H874M610 299.5H874M610 325.5H874"/>
</g>
<polygon points="822.6,259.3 827.6,275.8 832.6,295.3 838.1,301.3 843.1,301.3 848.5,294.1 853.5,300.7 858.4,316.0 863.4,321.1 868.4,309.6 873.7,301.1 873.7,331 822.6,331" fill="#3346d3" fill-opacity="0.14"/>
<polyline points="609.5,132.9 614.3,216.0 619.3,215.4 624.3,226.0 629.4,230.9 634.2,222.4 639.2,226.3 644.2,217.4 649.3,209.0 655.3,214.0 660.7,212.4 665.6,220.0 670.6,226.3 675.2,227.3 680.5,219.0 685.5,210.0 690.5,209.2 695.5,219.4 700.4,226.3 705.4,227.3 710.8,238.3 716.0,248.8 721.3,258.2 726.3,258.2 731.3,249.6 736.2,258.2 741.6,256.2 746.6,243.7 751.7,257.2 756.5,256.2 761.3,255.2 766.8,246.4 771.5,246.4 776.9,254.2 781.8,259.6 787.4,266.1 792.4,254.8 797.4,228.7 802.3,243.7 807.3,227.7 812.7,243.7 817.6,258.8 822.6,259.3" fill="none" stroke="#111" stroke-width="1.3" stroke-linejoin="round"/>
<polyline points="822.6,259.3 827.6,275.8 832.6,295.3 838.1,301.3 843.1,301.3 848.5,294.1 853.5,300.7 858.4,316.0 863.4,321.1 868.4,309.6 873.7,301.1" fill="none" stroke="#3346d3" stroke-width="3" stroke-linejoin="round" stroke-linecap="round"/>
<path d="M609.5 122.5H873.5M609.5 122.5V331.5M609 331.5H874" stroke="#000" stroke-width="1.1" fill="none"/>
<path d="M822.5 122.5V331M873.5 122.5V331M609.5 301.3H873.7" stroke="#3346d3" stroke-width="1.1" fill="none"/>
<text x="611.5" y="135.5" font-size="14" font-weight="bold" fill="#8a8a8a">$NATGAS</text>
<g font-size="9.5" fill="#000">
<text x="874.5" y="147.8">6</text><text x="874.5" y="173.6">5.5</text><text x="874.5" y="199.5">5</text><text x="874.5" y="225.4">4.5</text><text x="874.5" y="250.6">4</text><text x="874.5" y="276.6">3.5</text><text x="874.5" y="302.5">3</text><text x="874.5" y="328.2">2.5</text>
</g>
<rect x="874.2" y="297" width="44" height="12" fill="#fdfdfd" fill-opacity="0.92"/>
<text x="874.7" y="305.6" font-size="9.5" fill="#3346d3">2.96</text>
<g font-size="9.7" fill="#000" text-anchor="middle">
<text x="639.5" y="340.5">Apr</text><text x="705" y="340.5">Jul</text><text x="771.5" y="340.5">Oct</text><text x="837.5" y="340.5">2015</text>
</g>
<!-- slider -->
<rect x="685" y="357.5" width="151.5" height="5" rx="2.5" fill="url(#trk)" stroke="#a4a4a4" stroke-width="0.8"/>
<circle cx="735" cy="360" r="7.5" fill="#fbfbfb" stroke="#a0a0a0" stroke-width="0.9"/>
<!-- expand icon -->
<g fill="#444" stroke="#444" stroke-width="1.9" stroke-linecap="butt">
<path d="M916.6 92.3L911.6 97.3M910.2 98.7L905.6 103.3" fill="none"/>
<path d="M913 91H918V96Z" stroke="none"/>
<path d="M904.2 99V104H909.2Z" stroke="none"/>
</g>
<!-- resize grip -->
<g stroke="#4a4a4a" stroke-width="1.6" fill="none"><path d="M904.6 510.7L918 497.3M909.4 510.7L918 502.2M914.1 510.7L918 506.9"/></g>
</svg>

<div class="abs" style="left:612.5px;top:351px;font-size:12px;line-height:16px">Tail Length:</div>
<div class="abs" style="left:843.5px;top:351px;font-size:12px;line-height:16px">10 weeks</div>
<div class="abs rb" style="left:613px;top:383px;width:68px">animate</div>
<div class="abs rb" style="left:686px;top:383px;width:38px">+</div>
<div class="abs rb" style="left:730px;top:383px;width:38px">&minus;</div>
<div class="abs rb" style="left:773px;top:383px;width:38px">fit</div>
<div class="abs rb" style="left:816px;top:383px;width:38px">ctr</div>
<div class="abs rb" style="left:860px;top:383px;width:38px">max</div>

<div class="abs" style="left:8.5px;top:521px;font-size:14px;line-height:18px">10 weeks ending Feb 20, 2015</div>
<table id="tbl" class="abs">
<colgroup><col style="width:40px"><col style="width:47px"><col style="width:53px"><col style="width:69px"><col style="width:226px"><col style="width:51px"><col style="width:123px"><col style="width:44px"><col style="width:80px"></colgroup>
<tr><th>chart</th><th>visible</th><th style="position:relative">tail<svg style="position:absolute;left:23px;top:0" width="7" height="4" viewBox="0 0 7 4"><path d="M0.5 0h6L3.5 3.6z" fill="#000"/></svg></th><th>symbol</th><th>name</th><th>sector</th><th>industry</th><th>price</th><th>%chg</th></tr>
<tr class="g"><td class="c"><svg class="ci" width="13" height="12" viewBox="0 0 13 12"><g stroke="#000" stroke-width="1" fill="none"><path d="M2.3 1.8V4.4M2.3 9.5V11.4"/><rect x="1.2" y="4.6" width="2.2" height="4.8"/><path d="M6.5 0.5V10.5"/><rect x="5.4" y="2.6" width="2.2" height="4.8" fill="#000"/><path d="M10.7 5.7V9.2"/><rect x="9.6" y="1.1" width="2.2" height="4.5"/></g></svg></td><td class="c"><span class="cb on"><svg width="12" height="12" viewBox="0 0 12 12"><path d="M3 6.3l2.2 2.4L9 3.4" fill="none" stroke="#fff" stroke-width="1.7" stroke-linecap="round" stroke-linejoin="round"/></svg></span></td><td class="t"><i class="tb" style="width:40px;background:#0b7d25"></i></td><td class="r">AAV.TO</td><td class="r">Advantage Oil Gas Ltd.</td><td class="l">Energy</td><td class="l">Oil &amp; Gas Producers</td><td class="r">6.76</td><td class="p"><i class="pb" style="width:36px;background:#0a8a2e"></i>26.8</td></tr>
<tr class="g"><td class="c"><svg class="ci" width="13" height="12" viewBox="0 0 13 12"><g stroke="#000" stroke-width="1" fill="none"><path d="M2.3 1.8V4.4M2.3 9.5V11.4"/><rect x="1.2" y="4.6" width="2.2" height="4.8"/><path d="M6.5 0.5V10.5"/><rect x="5.4" y="2.6" width="2.2" height="4.8" fill="#000"/><path d="M10.7 5.7V9.2"/><rect x="9.6" y="1.1" width="2.2" height="4.5"/></g></svg></td><td class="c"><span class="cb on"><svg width="12" height="12" viewBox="0 0 12 12"><path d="M3 6.3l2.2 2.4L9 3.4" fill="none" stroke="#fff" stroke-width="1.7" stroke-linecap="round" stroke-linejoin="round"/></svg></span></td><td class="t"><i class="tb" style="width:40px;background:#0b7d25"></i></td><td class="r">PEY.TO</td><td class="r">Peyto Exploration &amp; Development Corp.</td><td class="l">Energy</td><td class="l">Oil &amp; Gas Producers</td><td class="r">35.85</td><td class="p"><i class="pb" style="width:14px;background:#0a8a2e"></i>10.4</td></tr>
<tr class="g"><td class="c"><svg class="ci" width="13" height="12" viewBox="0 0 13 12"><g stroke="#000" stroke-width="1" fill="none"><path d="M2.3 1.8V4.4M2.3 9.5V11.4"/><rect x="1.2" y="4.6" width="2.2" height="4.8"/><path d="M6.5 0.5V10.5"/><rect x="5.4" y="2.6" width="2.2" height="4.8" fill="#000"/><path d="M10.7 5.7V9.2"/><rect x="9.6" y="1.1" width="2.2" height="4.5"/></g></svg></td><td class="c"><span class="cb on"><svg width="12" height="12" viewBox="0 0 12 12"><path d="M3 6.3l2.2 2.4L9 3.4" fill="none" stroke="#fff" stroke-width="1.7" stroke-linecap="round" stroke-linejoin="round"/></svg></span></td><td class="t"><i class="tb" style="width:40px;background:#0b7d25"></i></td><td class="r">TOU.TO</td><td class="r">Tourmaline Oil Corp.</td><td class="l">Energy</td><td class="l">Oil &amp; Gas Producers</td><td class="r">41.60</td><td class="p"><i class="pb" style="width:23px;background:#0a8a2e"></i>16.8</td></tr>
<tr class="g"><td class="c"><svg class="ci" width="13" height="12" viewBox="0 0 13 12"><g stroke="#000" stroke-width="1" fill="none"><path d="M2.3 1.8V4.4M2.3 9.5V11.4"/><rect x="1.2" y="4.6" width="2.2" height="4.8"/><path d="M6.5 0.5V10.5"/><rect x="5.4" y="2.6" width="2.2" height="4.8" fill="#000"/><path d="M10.7 5.7V9.2"/><rect x="9.6" y="1.1" width="2.2" height="4.5"/></g></svg></td><td class="c"><span class="cb on"><svg width="12" height="12" viewBox="0 0 12 12"><path d="M3 6.3l2.2 2.4L9 3.4" fill="none" stroke="#fff" stroke-width="1.7" stroke-linecap="round" stroke-linejoin="round"/></svg></span></td><td class="t"><i class="tb" style="width:40px;background:#0b7d25"></i></td><td class="r">ARX.TO</td><td class="r">ARC Resources Ltd.</td><td class="l">Energy</td><td class="l">Oil &amp; Gas Producers</td><td class="r">24.31</td><td class="p"><i class="pb" style="width:6px;background:#0a8a2e"></i>4.3</td></tr>
<tr class="g"><td class="c"><svg class="ci" width="13" height="12" viewBox="0 0 13 12"><g stroke="#000" stroke-width="1" fill="none"><path d="M2.3 1.8V4.4M2.3 9.5V11.4"/><rect x="1.2" y="4.6" width="2.2" height="4.8"/><path d="M6.5 0.5V10.5"/><rect x="5.4" y="2.6" width="2.2" height="4.8" fill="#000"/><path d="M10.7 5.7V9.2"/><rect x="9.6" y="1.1" width="2.2" height="4.5"/></g></svg></td><td class="c"><span class="cb on"><svg width="12" height="12" viewBox="0 0 12 12"><path d="M3 6.3l2.2 2.4L9 3.4" fill="none" stroke="#fff" stroke-width="1.7" stroke-linecap="round" stroke-linejoin="round"/></svg></span></td><td class="t"><i class="tb" style="width:30px;background:#0b7d25"></i></td><td class="r">PNE.V</td><td class="r">Pine Cliff Energy Ltd.</td><td class="l">Energy</td><td class="l">Oil &amp; Gas Producers</td><td class="r">1.42</td><td class="p"><i class="pb" style="width:9px;background:#cc0a14"></i>-6.6</td></tr>
<tr class="g"><td class="c"><svg class="ci" width="13" height="12" viewBox="0 0 13 12"><g stroke="#000" stroke-width="1" fill="none"><path d="M2.3 1.8V4.4M2.3 9.5V11.4"/><rect x="1.2" y="4.6" width="2.2" height="4.8"/><path d="M6.5 0.5V10.5"/><rect x="5.4" y="2.6" width="2.2" height="4.8" fill="#000"/><path d="M10.7 5.7V9.2"/><rect x="9.6" y="1.1" width="2.2" height="4.5"/></g></svg></td><td class="c"><span class="cb off"></span></td><td class="t"><i class="tb" style="width:1px;background:#0b7d25"></i></td><td class="r">$NATGAS</td><td class="r">Natural Gas - Spot Price (EOD)</td><td class="l"></td><td class="l"></td><td class="r">2.96</td><td class="p"><i class="pb" style="width:29px;background:#cc0a14"></i>-21.5</td></tr>
<tr class="b"><td class="c"><svg class="ci" width="13" height="12" viewBox="0 0 13 12"><g stroke="#000" stroke-width="1" fill="none"><path d="M2.3 1.8V4.4M2.3 9.5V11.4"/><rect x="1.2" y="4.6" width="2.2" height="4.8"/><path d="M6.5 0.5V10.5"/><rect x="5.4" y="2.6" width="2.2" height="4.8" fill="#000"/><path d="M10.7 5.7V9.2"/><rect x="9.6" y="1.1" width="2.2" height="4.5"/></g></svg></td><td class="c"><span class="cb on"><svg width="12" height="12" viewBox="0 0 12 12"><path d="M3 6.3l2.2 2.4L9 3.4" fill="none" stroke="#fff" stroke-width="1.7" stroke-linecap="round" stroke-linejoin="round"/></svg></span></td><td class="t"><i class="tb" style="width:40px;background:#3346d3"></i></td><td class="r">TET.TO</td><td class="r">Trilogy Energy Corp.</td><td class="l">Energy</td><td class="l">Oil &amp; Gas Producers</td><td class="r">7.85</td><td class="p"><i class="pb" style="width:3px;background:#0a8a2e"></i>2.2</td></tr>
<tr class="b"><td class="c"><svg class="ci" width="13" height="12" viewBox="0 0 13 12"><g stroke="#000" stroke-width="1" fill="none"><path d="M2.3 1.8V4.4M2.3 9.5V11.4"/><rect x="1.2" y="4.6" width="2.2" height="4.8"/><path d="M6.5 0.5V10.5"/><rect x="5.4" y="2.6" width="2.2" height="4.8" fill="#000"/><path d="M10.7 5.7V9.2"/><rect x="9.6" y="1.1" width="2.2" height="4.5"/></g></svg></td><td class="c"><span class="cb on"><svg width="12" height="12" viewBox="0 0 12 12"><path d="M3 6.3l2.2 2.4L9 3.4" fill="none" stroke="#fff" stroke-width="1.7" stroke-linecap="round" stroke-linejoin="round"/></svg></span></td><td class="t"><i class="tb" style="width:40px;background:#3346d3"></i></td><td class="r">DEE.TO</td><td class="r">Delphi Energy Corp.</td><td class="l">Energy</td><td class="l">Oil &amp; Gas Producers</td><td class="r">1.30</td><td class="p"><i class="pb" style="width:1px;background:#0a8a2e"></i>0.0</td></tr>
<tr class="b"><td class="c"><svg class="ci" width="13" height="12" viewBox="0 0 13 12"><g stroke="#000" stroke-width="1" fill="none"><path d="M2.3 1.8V4.4M2.3 9.5V11.4"/><rect x="1.2" y="4.6" width="2.2" height="4.8"/><path d="M6.5 0.5V10.5"/><rect x="5.4" y="2.6" width="2.2" height="4.8" fill="#000"/><path d="M10.7 5.7V9.2"/><rect x="9.6" y="1.1" width="2.2" height="4.5"/></g></svg></td><td class="c"><span class="cb on"><svg width="12" height="12" viewBox="0 0 12 12"><path d="M3 6.3l2.2 2.4L9 3.4" fill="none" stroke="#fff" stroke-width="1.7" stroke-linecap="round" stroke-linejoin="round"/></svg></span></td><td class="t"><i class="tb" style="width:40px;background:#3346d3"></i></td><td class="r">CQE.TO</td><td class="r">Cequence Energy Ltd.</td><td class="l">Energy</td><td class="l">Oil &amp; Gas Producers</td><td class="r">0.93</td><td class="p"><i class="pb" style="width:11px;background:#cc0a14"></i>-7.9</td></tr>
<tr class="b"><td class="c"><svg class="ci" width="13" height="12" viewBox="0 0 13 12"><g stroke="#000" stroke-width="1" fill="none"><path d="M2.3 1.8V4.4M2.3 9.5V11.4"/><rect x="1.2" y="4.6" width="2.2" height="4.8"/><path d="M6.5 0.5V10.5"/><rect x="5.4" y="2.6" width="2.2" height="4.8" fill="#000"/><path d="M10.7 5.7V9.2"/><rect x="9.6" y="1.1" width="2.2" height="4.5"/></g></svg></td><td class="c"><span class="cb on"><svg width="12" height="12" viewBox="0 0 12 12"><path d="M3 6.3l2.2 2.4L9 3.4" fill="none" stroke="#fff" stroke-width="1.7" stroke-linecap="round" stroke-linejoin="round"/></svg></span></td><td class="t"><i class="tb" style="width:40px;background:#3346d3"></i></td><td class="r">RTK.TO</td><td class="r">Artek Exploration Ltd.</td><td class="l">Energy</td><td class="l">Oil &amp; Gas Producers</td><td class="r">1.75</td><td class="p"><i class="pb" style="width:28px;background:#0a8a2e"></i>20.7</td></tr>
<tr class="b"><td class="c"><svg class="ci" width="13" height="12" viewBox="0 0 13 12"><g stroke="#000" stroke-width="1" fill="none"><path d="M2.3 1.8V4.4M2.3 9.5V11.4"/><rect x="1.2" y="4.6" width="2.2" height="4.8"/><path d="M6.5 0.5V10.5"/><rect x="5.4" y="2.6" width="2.2" height="4.8" fill="#000"/><path d="M10.7 5.7V9.2"/><rect x="9.6" y="1.1" width="2.2" height="4.5"/></g></svg></td><td class="c"><span class="cb on"><svg width="12" height="12" viewBox="0 0 12 12"><path d="M3 6.3l2.2 2.4L9 3.4" fill="none" stroke="#fff" stroke-width="1.7" stroke-linecap="round" stroke-linejoin="round"/></svg></span></td><td class="t"><i class="tb" style="width:40px;background:#3346d3"></i></td><td class="r">BNP.TO</td><td class="r">Bonavista Energy Corp.</td><td class="l">Energy</td><td class="l">Oil &amp; Gas Producers</td><td class="r">7.45</td><td class="p"><i class="pb" style="width:10px;background:#0a8a2e"></i>7.3</td></tr>
<tr class="b"><td class="c"><svg class="ci" width="13" height="12" viewBox="0 0 13 12"><g stroke="#000" stroke-width="1" fill="none"><path d="M2.3 1.8V4.4M2.3 9.5V11.4"/><rect x="1.2" y="4.6" width="2.2" height="4.8"/><path d="M6.5 0.5V10.5"/><rect x="5.4" y="2.6" width="2.2" height="4.8" fill="#000"/><path d="M10.7 5.7V9.2"/><rect x="9.6" y="1.1" width="2.2" height="4.5"/></g></svg></td><td class="c"><span class="cb on"><svg width="12" height="12" viewBox="0 0 12 12"><path d="M3 6.3l2.2 2.4L9 3.4" fill="none" stroke="#fff" stroke-width="1.7" stroke-linecap="round" stroke-linejoin="round"/></svg></span></td><td class="t"><i class="tb" style="width:40px;background:#3346d3"></i></td><td class="r">KEL.TO</td><td class="r">Kelt Exploration Ltd.</td><td class="l">Energy</td><td class="l">Oil &amp; Gas Producers</td><td class="r">8.11</td><td class="p"><i class="pb" style="width:25px;background:#0a8a2e"></i>18.2</td></tr>
<tr class="b"><td class="c"><svg class="ci" width="13" height="12" viewBox="0 0 13 12"><g stroke="#000" stroke-width="1" fill="none"><path d="M2.3 1.8V4.4M2.3 9.5V11.4"/><rect x="1.2" y="4.6" width="2.2" height="4.8"/><path d="M6.5 0.5V10.5"/><rect x="5.4" y="2.6" width="2.2" height="4.8" fill="#000"/><path d="M10.7 5.7V9.2"/><rect x="9.6" y="1.1" width="2.2" height="4.5"/></g></svg></td><td class="c"><span class="cb on"><svg width="12" height="12" viewBox="0 0 12 12"><path d="M3 6.3l2.2 2.4L9 3.4" fill="none" stroke="#fff" stroke-width="1.7" stroke-linecap="round" stroke-linejoin="round"/></svg></span></td><td class="t"><i class="tb" style="width:40px;background:#3346d3"></i></td><td class="r">PMT.TO</td><td class="r">Perpetual Energy Inc.</td><td class="l">Energy</td><td class="l">Oil &amp; Gas Producers</td><td class="r">1.14</td><td class="p"><i class="pb" style="width:27px;background:#0a8a2e"></i>20.0</td></tr>
<tr class="b"><td class="c"><svg class="ci" width="13" height="12" viewBox="0 0 13 12"><g stroke="#000" stroke-width="1" fill="none"><path d="M2.3 1.8V4.4M2.3 9.5V11.4"/><rect x="1.2" y="4.6" width="2.2" height="4.8"/><path d="M6.5 0.5V10.5"/><rect x="5.4" y="2.6" width="2.2" height="4.8" fill="#000"/><path d="M10.7 5.7V9.2"/><rect x="9.6" y="1.1" width="2.2" height="4.5"/></g></svg></td><td class="c"><span class="cb on"><svg width="12" height="12" viewBox="0 0 12 12"><path d="M3 6.3l2.2 2.4L9 3.4" fill="none" stroke="#fff" stroke-width="1.7" stroke-linecap="round" stroke-linejoin="round"/></svg></span></td><td class="t"><i class="tb" style="width:40px;background:#3346d3"></i></td><td class="r">CR.TO</td><td class="r">Crew Energy Inc.</td><td class="l">Energy</td><td class="l">Oil &amp; Gas Producers</td><td class="r">5.96</td><td class="p"><i class="pb" style="width:6px;background:#0a8a2e"></i>4.6</td></tr>
<tr class="b"><td class="c"><svg class="ci" width="13" height="12" viewBox="0 0 13 12"><g stroke="#000" stroke-width="1" fill="none"><path d="M2.3 1.8V4.4M2.3 9.5V11.4"/><rect x="1.2" y="4.6" width="2.2" height="4.8"/><path d="M6.5 0.5V10.5"/><rect x="5.4" y="2.6" width="2.2" height="4.8" fill="#000"/><path d="M10.7 5.7V9.2"/><rect x="9.6" y="1.1" width="2.2" height="4.5"/></g></svg></td><td class="c"><span class="cb on"><svg width="12" height="12" viewBox="0 0 12 12"><path d="M3 6.3l2.2 2.4L9 3.4" fill="none" stroke="#fff" stroke-width="1.7" stroke-linecap="round" stroke-linejoin="round"/></svg></span></td><td class="t"><i class="tb" style="width:40px;background:#3346d3"></i></td><td class="r">ECA.TO</td><td class="r">EnCana Corp.</td><td class="l">Energy</td><td class="l">Oil &amp; Gas Producers</td><td class="r">16.81</td><td class="p"><i class="pb" style="width:26px;background:#0a8a2e"></i>19.1</td></tr>
<tr class="b"><td class="c"><svg class="ci" width="13" height="12" viewBox="0 0 13 12"><g stroke="#000" stroke-width="1" fill="none"><path d="M2.3 1.8V4.4M2.3 9.5V11.4"/><rect x="1.2" y="4.6" width="2.2" height="4.8"/><path d="M6.5 0.5V10.5"/><rect x="5.4" y="2.6" width="2.2" height="4.8" fill="#000"/><path d="M10.7 5.7V9.2"/><rect x="9.6" y="1.1" width="2.2" height="4.5"/></g></svg></td><td class="c"><span class="cb on"><svg width="12" height="12" viewBox="0 0 12 12"><path d="M3 6.3l2.2 2.4L9 3.4" fill="none" stroke="#fff" stroke-width="1.7" stroke-linecap="round" stroke-linejoin="round"/></svg></span></td><td class="t"><i class="tb" style="width:40px;background:#3346d3"></i></td><td class="r">NVA.TO</td><td class="r">NuVista Energy Ltd.</td><td class="l">Energy</td><td class="l">Oil &amp; Gas Producers</td><td class="r">8.36</td><td class="p"><i class="pb" style="width:40px;background:#0a8a2e"></i>41.0</td></tr>
<tr class="b"><td class="c"><svg class="ci" width="13" height="12" viewBox="0 0 13 12"><g stroke="#000" stroke-width="1" fill="none"><path d="M2.3 1.8V4.4M2.3 9.5V11.4"/><rect x="1.2" y="4.6" width="2.2" height="4.8"/><path d="M6.5 0.5V10.5"/><rect x="5.4" y="2.6" width="2.2" height="4.8" fill="#000"/><path d="M10.7 5.7V9.2"/><rect x="9.6" y="1.1" width="2.2" height="4.5"/></g></svg></td><td class="c"><span class="cb on"><svg width="12" height="12" viewBox="0 0 12 12"><path d="M3 6.3l2.2 2.4L9 3.4" fill="none" stroke="#fff" stroke-width="1.7" stroke-linecap="round" stroke-linejoin="round"/></svg></span></td><td class="t"><i class="tb" style="width:37px;background:#3346d3"></i></td><td class="r">PPY.TO</td><td class="r">Painted Pony Petroleum Ltd.</td><td class="l">Energy</td><td class="l">Oil &amp; Gas Producers</td><td class="r">7.73</td><td class="p"><i class="pb" style="width:26px;background:#cc0a14"></i>-19.0</td></tr>
<tr class="b"><td class="c"><svg class="ci" width="13" height="12" viewBox="0 0 13 12"><g stroke="#000" stroke-width="1" fill="none"><path d="M2.3 1.8V4.4M2.3 9.5V11.4"/><rect x="1.2" y="4.6" width="2.2" height="4.8"/><path d="M6.5 0.5V10.5"/><rect x="5.4" y="2.6" width="2.2" height="4.8" fill="#000"/><path d="M10.7 5.7V9.2"/><rect x="9.6" y="1.1" width="2.2" height="4.5"/></g></svg></td><td class="c"><span class="cb on"><svg width="12" height="12" viewBox="0 0 12 12"><path d="M3 6.3l2.2 2.4L9 3.4" fill="none" stroke="#fff" stroke-width="1.7" stroke-linecap="round" stroke-linejoin="round"/></svg></span></td><td class="t"><i class="tb" style="width:37px;background:#3346d3"></i></td><td class="r">BIR.TO</td><td class="r">Birchcliff Energy Limited</td><td class="l">Energy</td><td class="l">Oil &amp; Gas Producers</td><td class="r">7.26</td><td class="p"><i class="pb" style="width:7px;background:#cc0a14"></i>-4.8</td></tr>
<tr class="b"><td class="c"><svg class="ci" width="13" height="12" viewBox="0 0 13 12"><g stroke="#000" stroke-width="1" fill="none"><path d="M2.3 1.8V4.4M2.3 9.5V11.4"/><rect x="1.2" y="4.6" width="2.2" height="4.8"/><path d="M6.5 0.5V10.5"/><rect x="5.4" y="2.6" width="2.2" height="4.8" fill="#000"/><path d="M10.7 5.7V9.2"/><rect x="9.6" y="1.1" width="2.2" height="4.5"/></g></svg></td><td class="c"><span class="cb on"><svg width="12" height="12" viewBox="0 0 12 12"><path d="M3 6.3l2.2 2.4L9 3.4" fill="none" stroke="#fff" stroke-width="1.7" stroke-linecap="round" stroke-linejoin="round"/></svg></span></td><td class="t"><i class="tb" style="width:16px;background:#3346d3"></i></td><td class="r">SRX.V</td><td class="r">Storm Resources Ltd.</td><td class="l">Energy</td><td class="l">Oil &amp; Gas Producers</td><td class="r">4.32</td><td class="p"><i class="pb" style="width:21px;background:#0a8a2e"></i>15.8</td></tr>
<tr class="w"><td class="c"><svg class="ci" width="13" height="12" viewBox="0 0 13 12"><g stroke="#000" stroke-width="1" fill="none"><path d="M2.3 1.8V4.4M2.3 9.5V11.4"/><rect x="1.2" y="4.6" width="2.2" height="4.8"/><path d="M6.5 0.5V10.5"/><rect x="5.4" y="2.6" width="2.2" height="4.8" fill="#000"/><path d="M10.7 5.7V9.2"/><rect x="9.6" y="1.1" width="2.2" height="4.5"/></g></svg></td><td class="c"></td><td class="t"></td><td class="r">$NATGAS</td><td class="r">Natural Gas - Spot Price (EOD)</td><td class="l"></td><td class="l"></td><td class="r">2.96</td><td class="p"><i class="pb" style="width:29px;background:#cc0a14"></i>-21.5</td></tr>
</table>
</body></html>
